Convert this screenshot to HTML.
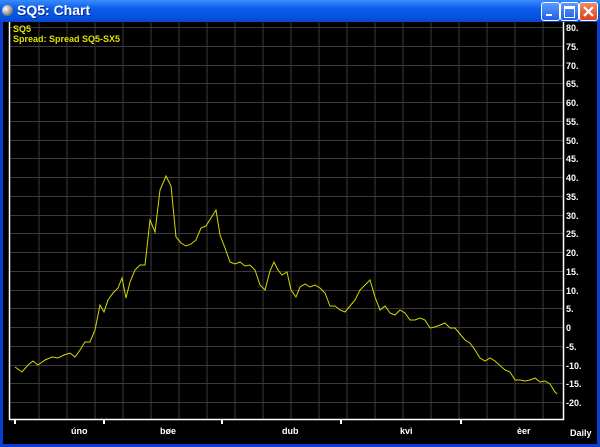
<!DOCTYPE html><html><head><style>
body{margin:0;width:600px;height:447px;overflow:hidden;background:#0a3fd0;font-family:"Liberation Sans",sans-serif}
.tb{position:absolute;left:0;top:0;width:600px;height:22px;background:linear-gradient(#3a8cff,#0a5ce8 40%,#0650e0 80%,#0a46c8)}
.tt{position:absolute;left:17px;top:2px;color:#fff;font-weight:bold;font-size:14px;text-shadow:1px 1px #0a2a90}
.btn{position:absolute;top:2px;width:17px;height:17px;border:1px solid #fff;border-radius:3px;background:linear-gradient(#5a9bff,#1f5ee8)}
.main{position:absolute;left:3px;top:22px;width:594px;height:422px;background:#000}
</style></head><body>
<div class="tb"></div>
<div style="position:absolute;left:2px;top:5px;width:11px;height:11px;border-radius:50%;background:radial-gradient(circle at 35% 35%,#fff,#888 60%,#333)"></div>
<div class="tt">SQ5: Chart</div>
<div class="btn" style="left:541px"><div style="position:absolute;left:4px;top:11px;width:6px;height:2px;background:#fff"></div></div>
<div class="btn" style="left:560px"><div style="position:absolute;left:3px;top:3px;width:9px;height:8px;border:1px solid #fff;border-top-width:3px"></div></div>
<div class="btn" style="left:579px;background:linear-gradient(#f08a6a,#d8441c)"><svg width="17" height="17"><path d="M4 4L13 13M13 4L4 13" stroke="#fff" stroke-width="2.2"/></svg></div>
<div class="main"></div>
<svg style="position:absolute;left:0;top:0" width="600" height="447">
<g stroke="#3a3a3a" stroke-width="1">
<path d="M39 22V419M67 22V419M95 22V419M123 22V419M151 22V419M179 22V419M207 22V419M235 22V419M263 22V419M291 22V419M319 22V419M347 22V419M375 22V419M403 22V419M431 22V419M459 22V419M487 22V419M515 22V419M543 22V419"/>
<path d="M10 27.5H563M10 46.5H563M10 65.5H563M10 83.5H563M10 102.5H563M10 121.5H563M10 140.5H563M10 158.5H563M10 177.5H563M10 196.5H563M10 215.5H563M10 233.5H563M10 252.5H563M10 271.5H563M10 290.5H563M10 308.5H563M10 327.5H563M10 346.5H563M10 365.5H563M10 383.5H563M10 402.5H563"/>
</g>
<path d="M9.5 22V419.5H563.5V22" fill="none" stroke="#fff" stroke-width="1.5"/>
<path d="M15 420V424M104 420V424M222 420V424M341 420V424M461 420V424" stroke="#fff" stroke-width="2"/>
<polyline fill="none" stroke="#d8d800" stroke-width="1" points="15,367 22,372 28,365 33,361 38,365 45,360 52,357 58,358 64,355 70,353 75,357 80,350 85,342 90,342 95,330 100,305 104,312 108,300 113,293 118,288 122,278 126,298 130,282 135,270 140,265 145,265 150,220 155,232 160,190 166,176 171,186 176,237 181,243 186,246 191,244 196,240 201,228 206,226 211,218 216,210 220,235 225,248 230,262 235,264 240,262 245,266 250,265 255,270 260,285 265,290 270,271 274,262 278,270 282,275 287,272 291,290 296,297 300,287 305,284 310,287 315,285 320,288 325,293 330,306 335,306 340,310 345,312 350,306 355,300 360,290 365,285 370,280 375,297 380,310 385,306 390,313 395,315 400,310 405,313 410,320 415,320 420,318 425,320 430,328 435,327 440,325 445,323 450,328 455,328 460,334 465,340 470,343 475,350 480,358 485,361 490,358 495,361 505,370 510,372 515,380 520,380 525,381 530,380 535,378 540,382 545,381 550,384 555,392 557,394"/>
<g fill="#fff" font-family="Liberation Sans,sans-serif" font-size="9" font-weight="bold">
<text x="566" y="31">80.</text><text x="566" y="50">75.</text><text x="566" y="69">70.</text><text x="566" y="87">65.</text><text x="566" y="106">60.</text><text x="566" y="125">55.</text><text x="566" y="144">50.</text><text x="566" y="162">45.</text><text x="566" y="181">40.</text><text x="566" y="200">35.</text><text x="566" y="219">30.</text><text x="566" y="237">25.</text><text x="566" y="256">20.</text><text x="566" y="275">15.</text><text x="566" y="294">10.</text><text x="566" y="312">5.</text><text x="566" y="331">0</text><text x="566" y="350">-5.</text><text x="566" y="369">-10.</text><text x="566" y="387">-15.</text><text x="566" y="406">-20.</text>
<text x="71" y="434">úno</text><text x="160" y="434">bøe</text><text x="282" y="434">dub</text><text x="400" y="434">kvi</text><text x="517" y="434">èer</text><text x="570" y="436">Daily</text>
</g>
<g fill="#e0e000" font-family="Liberation Sans,sans-serif" font-size="9" font-weight="bold">
<text x="13" y="32">SQ5</text><text x="13" y="42">Spread: Spread SQ5-SX5</text>
</g>
</svg>
</body></html>
